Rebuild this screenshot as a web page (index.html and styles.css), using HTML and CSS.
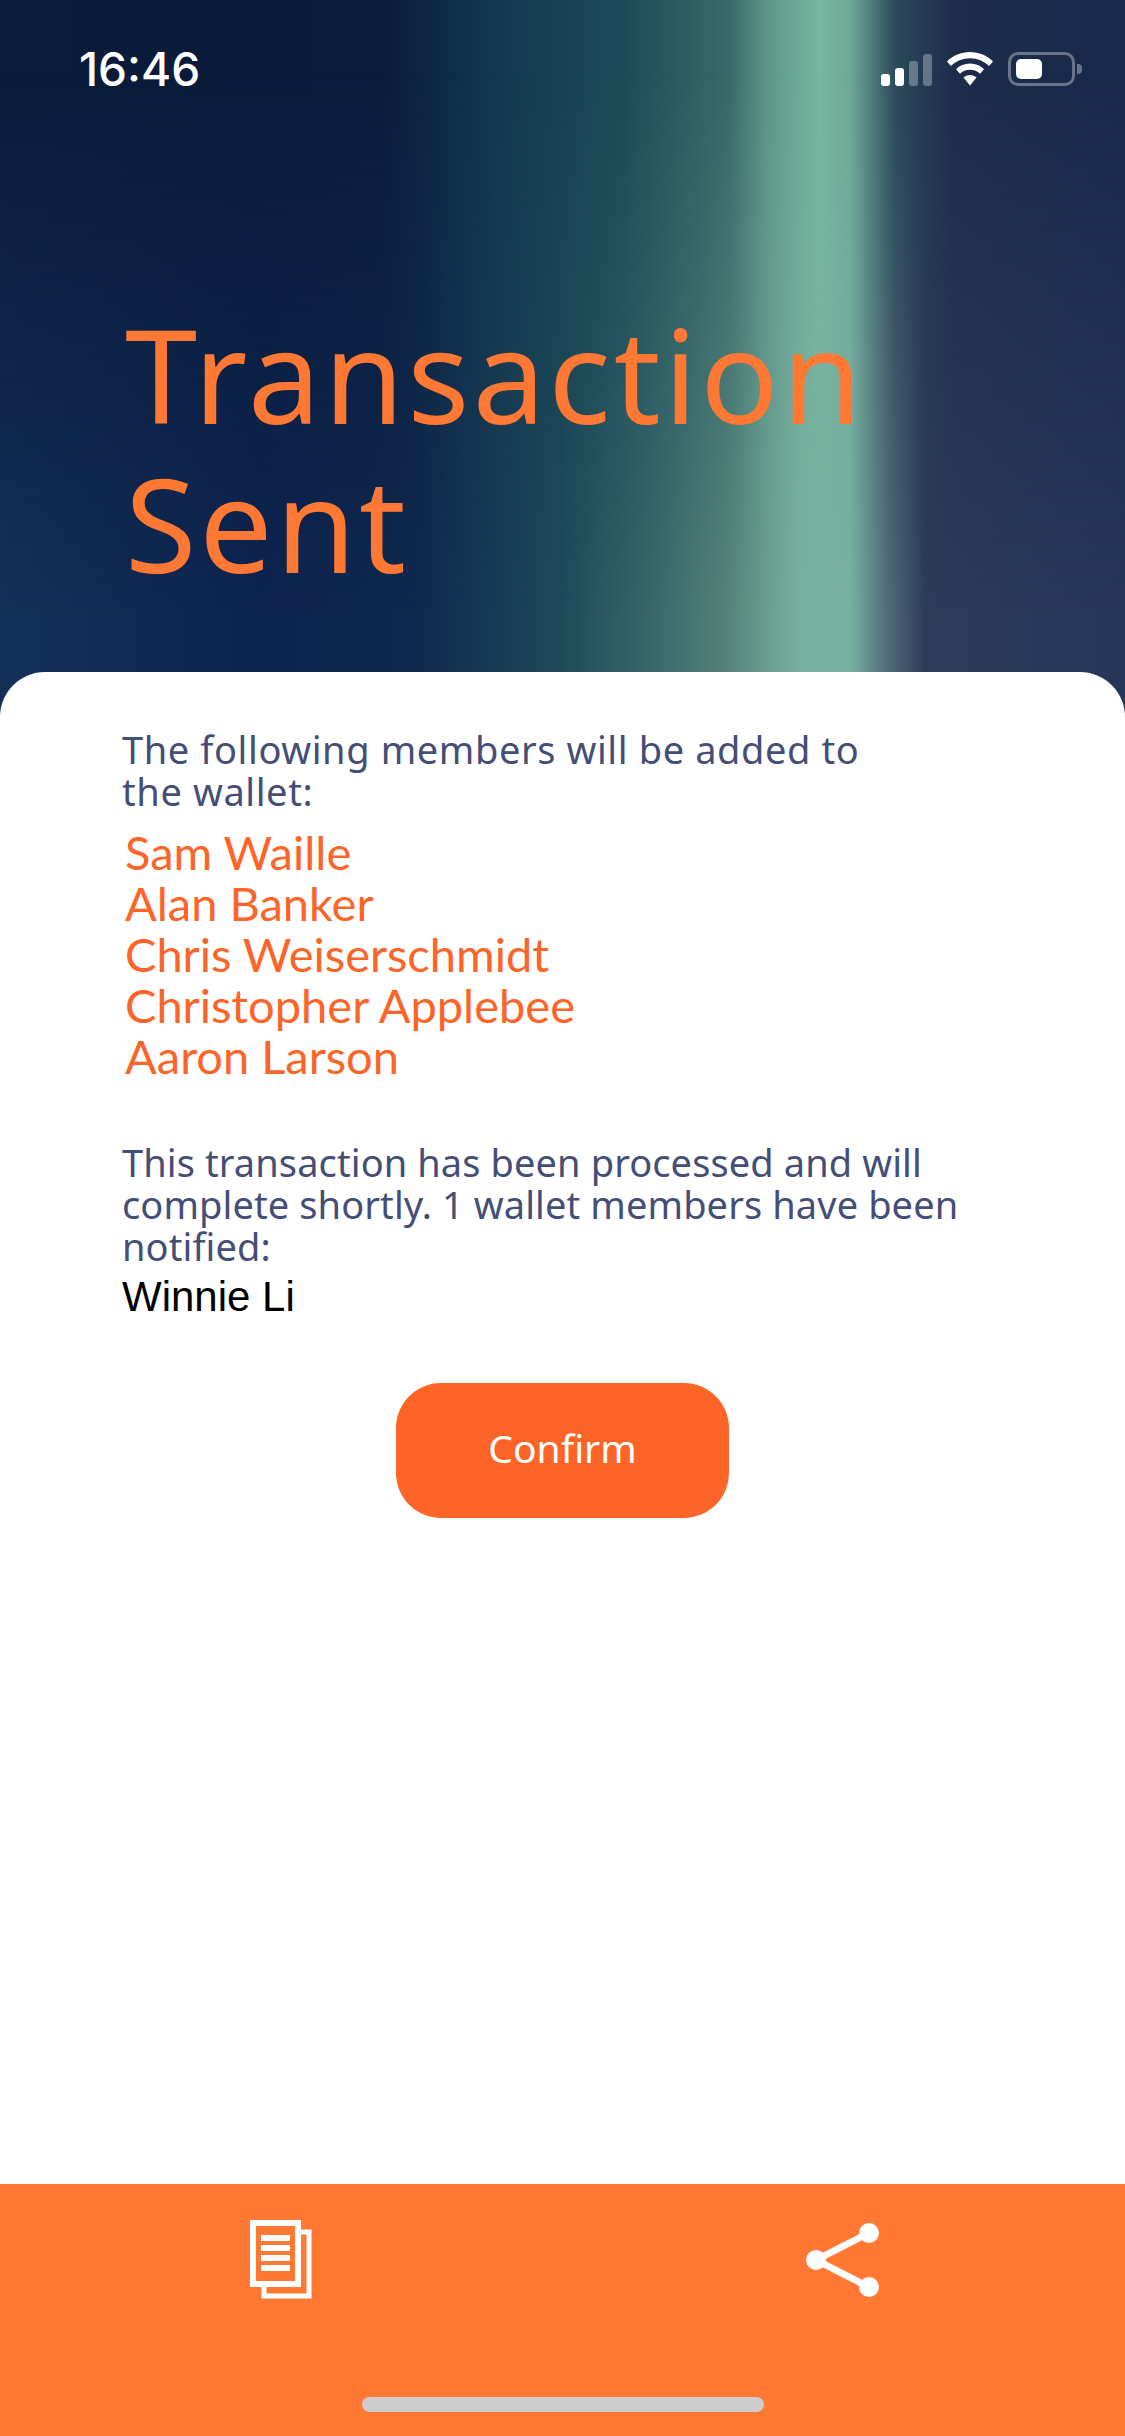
FILE: index.html
```html
<!DOCTYPE html>
<html lang="en">
<head>
<meta charset="UTF-8">
<meta name="viewport" content="width=device-width, initial-scale=1.0">
<title>Transaction Sent</title>
<link rel="stylesheet" href="styles.css">
</head>
<body>

<div class="screen">
    <!-- Header with status bar and title -->
    <header class="hero">
        <div class="status-bar">
            <span class="clock">16:46</span>
            <div class="status-icons">
                <div class="signal">
                    <span class="bar bar-1"></span>
                    <span class="bar bar-2"></span>
                    <span class="bar bar-3"></span>
                    <span class="bar bar-4"></span>
                </div>
                <svg class="wifi" width="46" height="34" viewBox="0 0 46 34">
                    <path d="M23 0C14 0 6 3.500 0 9.500L4 14C9 9 15.500 6.200 23 6.200S37 9 42 14L46 9.500C40 3.500 32 0 23 0Z" fill="#fff"/>
                    <path d="M23 11.500C17.500 11.500 12.600 13.700 9 17.300L13 21.800C15.500 19.300 19 17.800 23 17.800S30.500 19.300 33 21.800L37 17.300C33.400 13.700 28.500 11.500 23 11.500Z" fill="#fff"/>
                    <path d="M23 23C20.500 23 18.200 24 16.500 25.600L23 33.500L29.500 25.600C27.800 24 25.500 23 23 23Z" fill="#fff"/>
                </svg>
                <div class="battery">
                    <div class="battery-body"><span class="battery-fill"></span></div>
                    <span class="battery-nub"></span>
                </div>
            </div>
        </div>
        <h1>Transaction<br>Sent</h1>
    </header>

    <!-- Main card -->
    <main class="card">
        <p class="info info-members">The following members will be added to<br>the wallet:</p>
        <ul class="members">
            <li>Sam Waille</li>
            <li>Alan Banker</li>
            <li>Chris Weiserschmidt</li>
            <li>Christopher Applebee</li>
            <li>Aaron Larson</li>
        </ul>
        <p class="info info-status">This transaction has been processed and will<br>complete shortly. 1 wallet members have been<br>notified:</p>
        <p class="notified">Winnie Li</p>
        <button class="confirm">Confirm</button>
    </main>

    <!-- Bottom toolbar -->
    <footer class="toolbar">
        <div class="toolbar-icons">
            <svg class="icon-copy" width="62" height="79" viewBox="0 0 62 79">
                <path d="M50 12H59V76H14V67" fill="none" stroke="#fff" stroke-width="5"/>
                <rect x="3" y="3" width="45" height="61" fill="none" stroke="#fff" stroke-width="6"/>
                <rect x="11" y="15" width="29" height="6" fill="#fff"/>
                <rect x="11" y="25" width="29" height="6" fill="#fff"/>
                <rect x="11" y="35" width="29" height="6" fill="#fff"/>
                <rect x="11" y="45" width="29" height="6" fill="#fff"/>
            </svg>
            <svg class="icon-share" width="74" height="76" viewBox="0 0 74 76">
                <path d="M63 11L10 38L63 65" fill="none" stroke="#fff" stroke-width="7"/>
                <circle cx="63" cy="11" r="10" fill="#fff"/>
                <circle cx="10" cy="38" r="10" fill="#fff"/>
                <circle cx="63" cy="65" r="10" fill="#fff"/>
            </svg>
        </div>
        <div class="home-bar"></div>
    </footer>
</div>

</body>
</html>
```

FILE: styles.css
```css
/* Reset */
* {
    box-sizing: border-box;
    margin: 0;
    padding: 0;
}

body {
    width: 1125px;
    height: 2436px;
    overflow: hidden;
    background: #fff;
    font-family: 'Noto Sans', sans-serif;
}

.screen {
    display: flex;
    flex-direction: column;
    height: 2436px;
}

/* Header */
.hero {
    position: relative;
    height: 722px;
    padding: 43px 43px 0 79px;
    background: linear-gradient(90deg, #0b1b3a 0, #0a1c3b 380px, #14394f 500px, #1c4a58 620px, #3a6a6c 730px, #5c9488 765px, #76b8a0 820px, #6fa898 850px, #2c4a5c 895px, #1c2c4a 955px, #18294a 1125px);
}

/* Lower half of the backdrop, band drifts left going down */
.hero::before {
    content: "";
    position: absolute;
    inset: 0;
    background: linear-gradient(90deg, #143058 0, #0d2450 260px, #10294e 420px, #1e4a5a 560px, #3c6a6e 660px, #528078 720px, #78b0a0 800px, #78b0a2 850px, #54707e 885px, #2c3c58 925px, #26365a 1125px);
    -webkit-mask-image: linear-gradient(to bottom, transparent 10%, #000 85%);
    mask-image: linear-gradient(to bottom, transparent 10%, #000 85%);
}

.status-bar, .hero h1 {
    position: relative;
}

.status-bar {
    display: flex;
    justify-content: space-between;
    align-items: center;
    height: 52px;
}

.clock {
    font-family: 'Inter', sans-serif;
    font-size: 46px;
    font-weight: 500;
    color: #fff;
}

.status-icons {
    display: flex;
    align-items: center;
    gap: 15px;
}

.signal {
    display: flex;
    align-items: flex-end;
    gap: 5px;
    height: 33px;
}

.bar {
    width: 9px;
    border-radius: 3px;
    background: #fff;
}

.bar-1 { height: 12px; }
.bar-2 { height: 18px; }
.bar-3 { height: 25px; background: rgba(255, 255, 255, 0.3); }
.bar-4 { height: 32px; background: rgba(255, 255, 255, 0.3); }

.battery {
    display: flex;
    align-items: center;
    gap: 2px;
}

.battery-body {
    width: 67px;
    height: 34px;
    padding: 4px 5px;
    border: 3px solid rgba(255, 255, 255, 0.35);
    border-radius: 10px;
}

.battery-fill {
    display: block;
    width: 26px;
    height: 100%;
    border-radius: 5px;
    background: #fff;
}

.battery-nub {
    width: 5px;
    height: 10px;
    border-radius: 0 4px 4px 0;
    background: rgba(255, 255, 255, 0.35);
}

.hero h1 {
    margin: 204px 0 0 46px;
    font-size: 130px;
    font-weight: 400;
    letter-spacing: 3px;
    line-height: 149px;
    color: #ff7935;
}

/* Card */
.card {
    position: relative;
    flex: 1;
    margin-top: -50px;
    padding: 56px 104px 0 122px;
    background: #fff;
    border-radius: 45px 45px 0 0;
}

.info {
    font-size: 38px;
    line-height: 42px;
    color: #444e76;
}

.info-members {
    letter-spacing: 0.6px;
}

.info-status {
    margin-top: 59px;
    letter-spacing: 0.1px;
}

.members {
    margin: 15px 0 0 3px;
    list-style: none;
    font-family: 'Lato', sans-serif;
    font-size: 47px;
    line-height: 51px;
    color: #fc6428;
}

.notified {
    margin-top: 7px;
    font-family: 'Liberation Sans', sans-serif;
    font-size: 42px;
    line-height: 46px;
    color: #000;
}

.confirm {
    display: block;
    width: 333px;
    height: 135px;
    margin: 63px 0 0 274px;
    padding-bottom: 6px;
    border: none;
    border-radius: 45px;
    background: #fc6428;
    font-family: 'Noto Sans', sans-serif;
    font-size: 39px;
    color: #fff;
}

/* Toolbar */
.toolbar {
    display: flex;
    flex-direction: column;
    height: 252px;
    background: #ff7935;
}

.toolbar-icons {
    display: flex;
    justify-content: space-between;
    align-items: flex-start;
    height: 213px;
    padding: 36px 245px 0 250px;
}

.icon-share {
    margin-top: 2px;
}

.home-bar {
    width: 402px;
    height: 15px;
    margin: 0 auto;
    border-radius: 8px;
    background: #cdcdcd;
}
```
